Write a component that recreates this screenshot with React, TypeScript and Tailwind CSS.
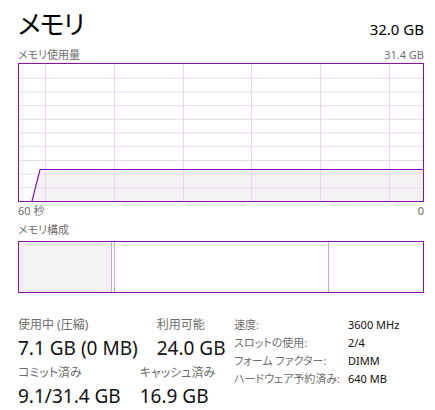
const FONT = "[font-family:'Noto_Sans','Noto_Sans_CJK_JP',sans-serif] [font-feature-settings:'palt']";

const VLINES = [26, 95, 164, 232, 301, 370];
const HLINES = [1, 2, 3, 4, 5, 6, 7, 8, 9];

const SPECS = [
  ["速度:", "3600 MHz"],
  ["スロットの使用:", "2/4"],
  ["フォーム ファクター:", "DIMM"],
  ["ハードウェア予約済み:", "640 MB"],
];

function UsageChart() {
  return (
    <div className="h-[139px] border border-[#8b12ae] bg-white">
      <svg width="404" height="137" viewBox="0 0 404 137" className="block">
        <polygon points="13,137 21,105.5 404,105.5 404,137" fill="#f4f2f5" />
        {HLINES.map((i) => (
          <line key={i} x1="0" x2="404" y1={i * 13.7 + 0.5} y2={i * 13.7 + 0.5} stroke="#e9d9ee" strokeWidth="1" />
        ))}
        {VLINES.map((x) => (
          <line key={x} x1={x + 0.5} x2={x + 0.5} y1="0" y2="137" stroke="#e9d9ee" strokeWidth="1" />
        ))}
        <polyline points="13,137 21,105.5 404,105.5" fill="none" stroke="#8b12ae" strokeWidth="1.2" />
      </svg>
    </div>
  );
}

function CompositionBar() {
  return (
    <div className="flex h-[52px] border border-[#8b12ae] bg-white">
      <div className="w-[93px] border-r border-[#c9a6d4] bg-[#f3f1f4]" />
      <div className="w-[2px]" />
      <div className="w-[215px] border-l border-r border-[#c9a6d4]" />
      <div className="flex-1" />
    </div>
  );
}

function Stat({ label, value }: { label: string; value: string }) {
  return (
    <div className="flex flex-col">
      <span className="text-[12px] leading-[16px] text-[#6d6d6d]">{label}</span>
      <span className="mt-[6px] text-[19px] leading-[18px] text-[#111]">{value}</span>
    </div>
  );
}

export default function App() {
  return (
    <div className={`w-[435px] h-[410px] overflow-hidden bg-white pl-[18px] pr-[11px] ${FONT}`}>
      <div className="flex items-end justify-between pt-[7px]">
        <h1 className="text-[26px] leading-[34px] tracking-[-1px] text-black">メモリ</h1>
        <span className="pb-[2px] text-[15px] leading-[20px] text-black">32.0 GB</span>
      </div>

      <div className="mt-[6px] flex justify-between text-[11px] leading-[15px] text-[#707070]">
        <span>メモリ使用量</span>
        <span>31.4 GB</span>
      </div>
      <div className="mt-[1px]">
        <UsageChart />
      </div>
      <div className="mt-[1px] flex justify-between text-[11px] leading-[16px] text-[#707070]">
        <span>60 秒</span>
        <span>0</span>
      </div>

      <div className="mt-[3px] text-[11px] leading-[16px] text-[#707070]">メモリ構成</div>
      <div className="mt-[3px]">
        <CompositionBar />
      </div>

      <div className="mt-[24px] flex items-start">
        <div className="flex w-[216px] flex-col gap-[8px]">
          <div className="flex gap-[19px]">
            <Stat label="使用中 (圧縮)" value="7.1 GB (0 MB)" />
            <Stat label="利用可能" value="24.0 GB" />
          </div>
          <div className="flex gap-[19px]">
            <Stat label="コミット済み" value="9.1/31.4 GB" />
            <Stat label="キャッシュ済み" value="16.9 GB" />
          </div>
        </div>
        <div className="grid grid-cols-[114px_auto] content-start gap-y-[2px] text-[11px] leading-[16px]">
          {SPECS.map(([k, v]) => (
            <div key={k} className="contents">
              <span className="text-[#707070]">{k}</span>
              <span className="text-[#111]">{v}</span>
            </div>
          ))}
        </div>
      </div>
    </div>
  );
}
